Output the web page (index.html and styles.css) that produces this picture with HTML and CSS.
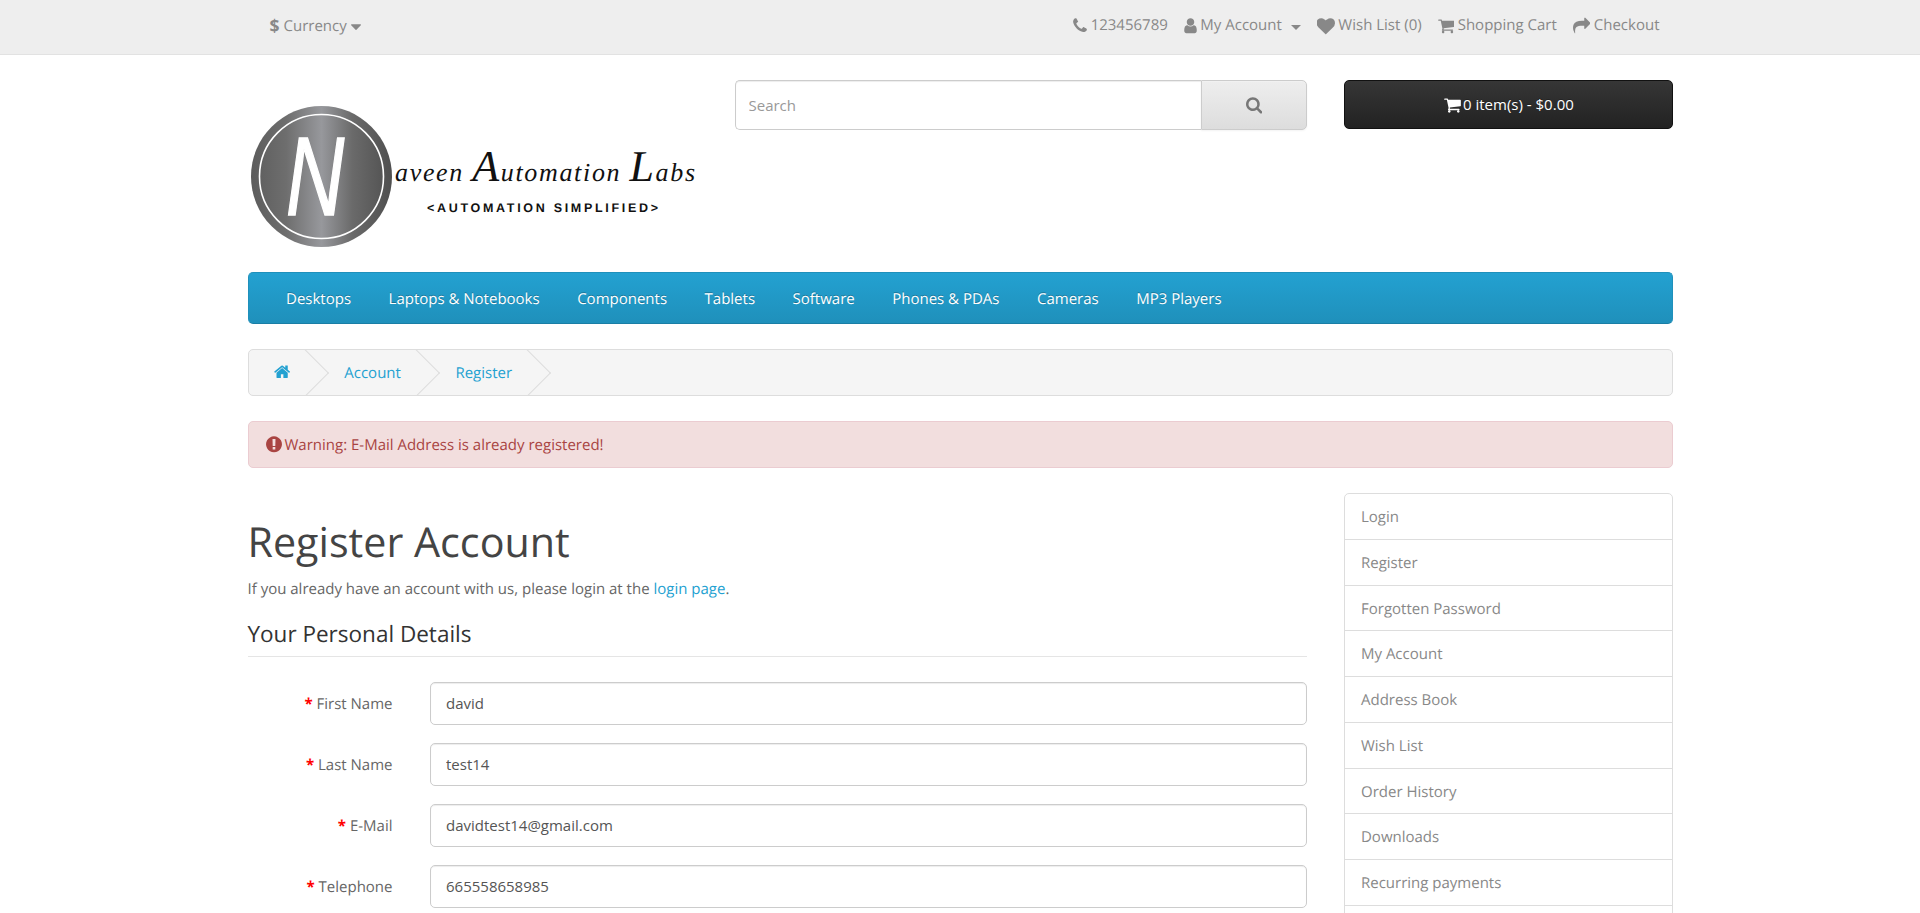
FILE: index.html
```html
<!DOCTYPE html>
<html lang="en">
<head>
<meta charset="utf-8">
<title>Register Account</title>
<link rel="stylesheet" href="styles.css">
</head>
<body>
<svg class="defs" aria-hidden="true">
  <defs>
    <path id="phone" d="M1600 1240q0 27-10 70.5t-21 68.5q-21 50-122 106-94 51-186 51-27 0-53-3.5t-57.5-12.5-47-14.5-55.5-20.5-49-18q-98-35-175-83-127-79-264-216t-216-264q-48-77-83-175-3-9-18-49t-20.5-55.5-14.5-47-12.5-57.5-3.5-53q0-92 51-186 56-101 106-122 25-11 68.5-21t70.5-10q14 0 21 3 18 6 53 76 11 19 30 54t35 63.5 31 53.5q3 4 17.5 25t21.5 35.5 7 28.5q0 20-28.5 50t-62 55-62 53-28.5 46q0 9 5 22.5t8.5 20.5 14 24 11.5 19q76 137 174 235t235 174q2 1 19 11.5t24 14 20.5 8.5 22.5 5q18 0 46-28.5t53-62 55-62 50-28.5q14 0 28.5 7t35.5 21.5 25 17.5q25 15 53.5 31t63.5 35 54 30q70 35 76 53 3 7 3 21z"/>
    <path id="user" d="M1536 1399q0 109-62.5 187t-150.5 78h-854q-88 0-150.5-78t-62.5-187q0-85 8.5-160.5t31.5-152 58.5-131 94-89 134.5-34.5q131 128 313 128t313-128q76 0 134.5 34.5t94 89 58.5 131 31.5 152 8.5 160.5zm-256-887q0 159-112.5 271.5t-271.5 112.5-271.5-112.5-112.5-271.5 112.5-271.5 271.5-112.5 271.5 112.5 112.5 271.5z"/>
    <path id="heart" d="M896 1664q-26 0-44-18l-624-602q-10-8-27.5-26t-55.5-65.5-68-97.5-53.5-121-23.5-138q0-220 127-344t351-124q62 0 126.5 21.5t120 58 95.5 68.5 76 68q36-36 76-68t95.5-68.5 120-58 126.5-21.5q224 0 351 124t127 344q0 221-229 450l-623 600q-18 18-44 18z"/>
    <path id="cart" d="M704 1536q0 52-38 90t-90 38-90-38-38-90 38-90 90-38 90 38 38 90zm896 0q0 52-38 90t-90 38-90-38-38-90 38-90 90-38 90 38 38 90zm128-1088v512q0 24-16.5 42.5t-40.5 21.5l-1044 122q13 60 13 70 0 16-24 64h920q26 0 45 19t19 45-19 45-45 19h-1024q-26 0-45-19t-19-45q0-11 8-31.5t16-36 21.5-40 15.5-29.5l-177-823h-204q-26 0-45-19t-19-45 19-45 45-19h256q16 0 28.5 6.5t19.5 15.5 13 24.5 8 26 5.5 29.5 4.5 26h1201q26 0 45 19t19 45z"/>
    <path id="share" d="M1792 640q0 26-19 45l-512 512q-19 19-45 19t-45-19-19-45v-256h-224q-98 0-175.5 6t-154 21.5-133 42.5-105.5 69.5-80 101-48.5 138.5-17.5 181q0 55 5 123 0 6 2.5 23.5t2.5 26.5q0 15-8.5 25t-23.5 10q-16 0-28-17-7-9-13-22t-13.5-30-10.5-24q-127-285-127-451 0-199 53-333 162-403 875-403h224v-256q0-26 19-45t45-19 45 19l512 512q19 19 19 45z"/>
    <path id="search" d="M1216 832q0-185-131.5-316.5t-316.5-131.5-316.5 131.5-131.5 316.5 131.5 316.5 316.5 131.5 316.5-131.5 131.5-316.5zm512 832q0 52-38 90t-90 38q-54 0-90-38l-343-342q-179 124-399 124-143 0-273.5-55.5t-225-150-150-225-55.5-273.5 55.5-273.5 150-225 225-150 273.5-55.5 273.5 55.5 225 150 150 225 55.5 273.5q0 220-124 399l343 343q37 37 37 90z"/>
    <path id="home" d="M1472 992v480q0 26-19 45t-45 19h-384v-384h-256v384h-384q-26 0-45-19t-19-45v-480q0-1 .5-3t.5-3l575-474 575 474q1 2 1 6zm223-69l-62 74q-8 9-21 11h-3q-13 0-21-7l-692-577-692 577q-12 8-24 7-13-2-21-11l-62-74q-8-10-7-23.5t11-21.5l719-599q32-26 76-26t76 26l244 204v-195q0-14 9-23t23-9h192q14 0 23 9t9 23v408l219 182q10 8 11 21.5t-7 23.5z"/>
    <path id="warn" d="M896 128q209 0 385.5 103t279.5 279.5 103 385.5-103 385.5-279.5 279.5-385.5 103-385.5-103-279.5-279.5-103-385.5 103-385.5 279.5-279.5 385.5-103zm128 1247v-190q0-14-9-23.5t-22-9.5h-192q-13 0-23 10t-10 23v190q0 13 10 23t23 10h192q13 0 22-9.5t9-23.5zm-2-344l18-621q0-12-10-18-10-8-24-8h-220q-14 0-24 8-10 6-10 18l17 621q0 10 10 17.5t24 7.5h185q14 0 23.5-7.5t10.5-17.5z"/>
    <path id="caret" d="M1408 704q0 26-19 45l-448 448q-19 19-45 19t-45-19l-448-448q-19-19-19-45t19-45 45-19h896q26 0 45 19t19 45z"/>
    <linearGradient id="metal" x1="0" x2="1" y1="0" y2="0">
      <stop offset="0" stop-color="#5c5c5c"/>
      <stop offset=".25" stop-color="#6e6e6e"/>
      <stop offset=".5" stop-color="#97989c"/>
      <stop offset=".72" stop-color="#6a6a6a"/>
      <stop offset="1" stop-color="#4f4f4f"/>
    </linearGradient>
  </defs>
</svg>

<nav class="topbar">
  <div class="container topbar-inner">
    <div class="currency">
      <strong class="dollar">$</strong>
      <span>Currency</span>
      <svg class="ic ic-caret" viewBox="384 0 1024 1792"><use href="#caret"/></svg>
    </div>
    <ul class="toplinks">
      <li><svg class="ic ic-phone" viewBox="192 0 1408 1792"><use href="#phone"/></svg><span>123456789</span></li>
      <li><svg class="ic ic-user" viewBox="256 0 1280 1792"><use href="#user"/></svg><span>My Account</span><i class="bs-caret"></i></li>
      <li><svg class="ic ic-heart" viewBox="64 0 1664 1792"><use href="#heart"/></svg><span>Wish List (0)</span></li>
      <li><svg class="ic ic-cart" viewBox="64 0 1664 1792"><use href="#cart"/></svg><span>Shopping Cart</span></li>
      <li><svg class="ic ic-share" viewBox="0 0 1792 1792"><use href="#share"/></svg><span>Checkout</span></li>
    </ul>
  </div>
</nav>

<div class="container">
  <header class="head">
    <a class="logo" href="#">
      <svg class="logo-svg" viewBox="0 0 450 150">
        <circle cx="73.5" cy="74.5" r="70.5" fill="url(#metal)"/>
        <circle cx="73.5" cy="74.5" r="62" fill="none" stroke="#fff" stroke-width="1.6"/>
        <text class="logo-n" x="0" y="0" transform="translate(38 113) scale(.72 1)">N</text>
        <text class="logo-script" x="147" y="79" textLength="300" lengthAdjust="spacing">aveen <tspan class="logo-cap">A</tspan>utomation <tspan class="logo-cap">L</tspan>abs</text>
        <text class="logo-tag" x="179" y="110" textLength="231" lengthAdjust="spacing">&lt;AUTOMATION SIMPLIFIED&gt;</text>
      </svg>
    </a>
    <div class="search">
      <input class="search-input" type="text" placeholder="Search">
      <button class="search-btn" type="button" aria-label="Search"><svg class="ic ic-search" viewBox="64 0 1664 1792"><use href="#search"/></svg></button>
    </div>
    <button class="cart-btn" type="button"><svg class="ic ic-cartw" viewBox="64 0 1664 1792"><use href="#cart"/></svg><span>0 item(s) - $0.00</span></button>
  </header>

  <nav class="menu">
    <ul class="menu-list">
      <li>Desktops</li>
      <li>Laptops &amp; Notebooks</li>
      <li>Components</li>
      <li>Tablets</li>
      <li>Software</li>
      <li>Phones &amp; PDAs</li>
      <li>Cameras</li>
      <li>MP3 Players</li>
    </ul>
  </nav>

  <ul class="breadcrumb">
    <li><a href="#" aria-label="Home"><svg class="ic ic-home" viewBox="64 0 1664 1792"><use href="#home"/></svg></a></li>
    <li><a href="#">Account</a></li>
    <li><a href="#">Register</a></li>
  </ul>

  <div class="alert"><svg class="ic ic-warn" viewBox="128 0 1536 1792"><use href="#warn"/></svg><span>Warning: E-Mail Address is already registered!</span></div>

  <div class="layout">
    <main class="content">
      <h1 class="title">Register Account</h1>
      <p class="intro">If you already have an account with us, please login at the <a href="#">login page</a>.</p>
      <form class="form">
        <h2 class="legend">Your Personal Details</h2>
        <div class="fields">
          <label class="field-label">First Name</label>
          <input class="field-input" type="text" value="david">
          <label class="field-label">Last Name</label>
          <input class="field-input" type="text" value="test14">
          <label class="field-label">E-Mail</label>
          <input class="field-input" type="text" value="davidtest14@gmail.com">
          <label class="field-label">Telephone</label>
          <input class="field-input" type="text" value="665558658985">
        </div>
      </form>
    </main>
    <aside class="side">
      <a href="#">Login</a>
      <a href="#">Register</a>
      <a href="#">Forgotten Password</a>
      <a href="#">My Account</a>
      <a href="#">Address Book</a>
      <a href="#">Wish List</a>
      <a href="#">Order History</a>
      <a href="#">Downloads</a>
      <a href="#">Recurring payments</a>
    </aside>
  </div>
</div>
</body>
</html>
```

FILE: styles.css
```css
* { box-sizing: border-box; }
html, body { margin: 0; height: 913px; overflow: hidden; }
body { background: #fff; color: #666; font: 15px/21.4px "Open Sans", "Liberation Sans", sans-serif; text-rendering: geometricPrecision; }
a { color: #23a1d1; text-decoration: none; }
ul { list-style: none; margin: 0; padding: 0; }
.defs { position: absolute; width: 0; height: 0; overflow: hidden; }
.container { width: 1425px; margin: 0 auto; }
.ic { display: block; flex: none; height: 17.5px; fill: currentColor; }

.topbar { height: 55px; background: #eee; border-bottom: 1px solid #e2e2e2; color: #888; }
.topbar-inner { display: flex; justify-content: space-between; align-items: center; height: 52px; }
.currency { display: flex; align-items: center; margin-left: 22px; padding-top: 2px; gap: 4px; }
.dollar { font-size: 17.5px; font-weight: 700; }
.ic-caret { width: 10px; }
.toplinks { display: flex; gap: 16px; margin-right: 13px; }
.toplinks li { display: flex; align-items: center; gap: 3.5px; }
.ic-phone { width: 14px; }
.ic-user { width: 13px; }
.ic-heart { width: 17.5px; height: 18.5px; }
.ic-cart { width: 16.5px; }
.ic-share { width: 17.5px; }
.bs-caret { width: 0; height: 0; margin-left: 6px; margin-top: 2px; border-top: 5px solid #888; border-left: 5px solid transparent; border-right: 5px solid transparent; }

.head { display: grid; grid-template-columns: 450px 571.9px 328.5px; column-gap: 37.5px; align-items: start; padding-top: 25px; height: 217px; }
.logo { display: block; margin-top: 22px; }
.logo-svg { display: block; width: 450px; height: 150px; }
.logo-n { font: italic 400 112px "Liberation Sans", sans-serif; fill: #fff; stroke: #fff; stroke-width: 1.5px; }
.logo-script { font: italic 400 26px "Liberation Serif", serif; fill: #111; }
.logo-cap { font-size: 44px; }
.logo-tag { font: 700 12.5px "Liberation Sans", sans-serif; fill: #111; }

.search { display: flex; height: 50px; }
.search-input { flex: 1; min-width: 0; height: 50px; padding: 0 12.5px; font: inherit; color: #555; background: #fff; border: 1px solid #ccc; border-right: 0; border-radius: 5px 0 0 5px; box-shadow: inset 0 1px 1px rgba(0,0,0,.075); outline: 0; }
.search-input::placeholder { color: #999; opacity: 1; }
.search-btn { display: flex; align-items: center; justify-content: center; width: 106px; height: 50px; padding: 0; color: #777; background: linear-gradient(#eee, #ddd); border: 1px solid #ccc; border-radius: 0 5px 5px 0; box-shadow: inset 0 1px 0 rgba(255,255,255,.2), 0 1px 2px rgba(0,0,0,.05); }
.ic-search { width: 16.25px; }
.cart-btn { display: flex; align-items: center; justify-content: center; gap: 2.5px; height: 49px; font: inherit; color: #fff; background: linear-gradient(#363636, #222); border: 1px solid #111; border-radius: 5px; text-shadow: 0 -1px 0 rgba(0,0,0,.25); }
.ic-cartw { width: 17px; height: 18px; }

.menu { height: 52px; background: linear-gradient(#23a1d1, #1f90bb); border: 1px solid #1f90bb; border-bottom-color: #1a7ea5; border-radius: 5px; }
.menu-list { display: flex; padding-left: 18.75px; color: #fff; text-shadow: 0 -1px 0 rgba(0,0,0,.25); }
.menu-list li { padding: 0 18.75px; line-height: 52px; }

.breadcrumb { display: flex; height: 47px; margin-top: 25px; overflow: hidden; background: #f5f5f5; border: 1px solid #ddd; border-radius: 5px; }
.breadcrumb li { position: relative; display: flex; align-items: center; height: 45px; padding: 2px 38px 0 16.5px; }
.breadcrumb li:first-child { padding-left: 25px; }
.breadcrumb li::after { content: ""; position: absolute; top: 6px; right: 6px; width: 33px; height: 33px; border-top: 1px solid #ddd; border-right: 1px solid #ddd; transform: rotate(45deg); }
.breadcrumb a { display: block; }
.ic-home { width: 16.25px; height: 17.5px; margin-top: -4px; }

.alert { display: flex; align-items: center; gap: 3px; height: 47px; margin-top: 25px; padding: 2px 17px 0; color: #a94442; background: #f2dede; border: 1px solid #ebccd1; border-radius: 5px; }
.ic-warn { width: 16px; height: 18.6px; margin-top: -2px; }

.layout { display: grid; grid-template-columns: 1059.4px 328.5px; column-gap: 37.5px; margin-top: 25px; align-items: start; }
.title { margin: 26.5px 0 0; font-size: 41.25px; font-weight: 400; line-height: 45.4px; color: #444; }
.intro { margin: 14.5px 0 0; }
.legend { margin: 17.5px 0 0; padding-bottom: 7px; font-size: 22.5px; font-weight: 400; line-height: 31px; color: #333; border-bottom: 1px solid #e5e5e5; }
.fields { display: grid; grid-template-columns: 145px 1fr; gap: 18.75px 37.5px; padding-top: 25px; align-items: center; }
.field-label { text-align: right; padding-top: 3px; }
.field-label::before { content: "* "; color: #f00; font-weight: 700; }
.field-input { height: 42.25px; padding: 0 15px; font: inherit; color: #555; background: #fff; border: 1px solid #ccc; border-radius: 5px; box-shadow: inset 0 1px 1px rgba(0,0,0,.075); outline: 0; }

.side { display: block; padding-bottom: 40px; border: 1px solid #ddd; border-radius: 5px; }
.side a { display: block; height: 45.75px; padding: 0 15.6px; line-height: 46px; color: #888; border-bottom: 1px solid #ddd; }
```
